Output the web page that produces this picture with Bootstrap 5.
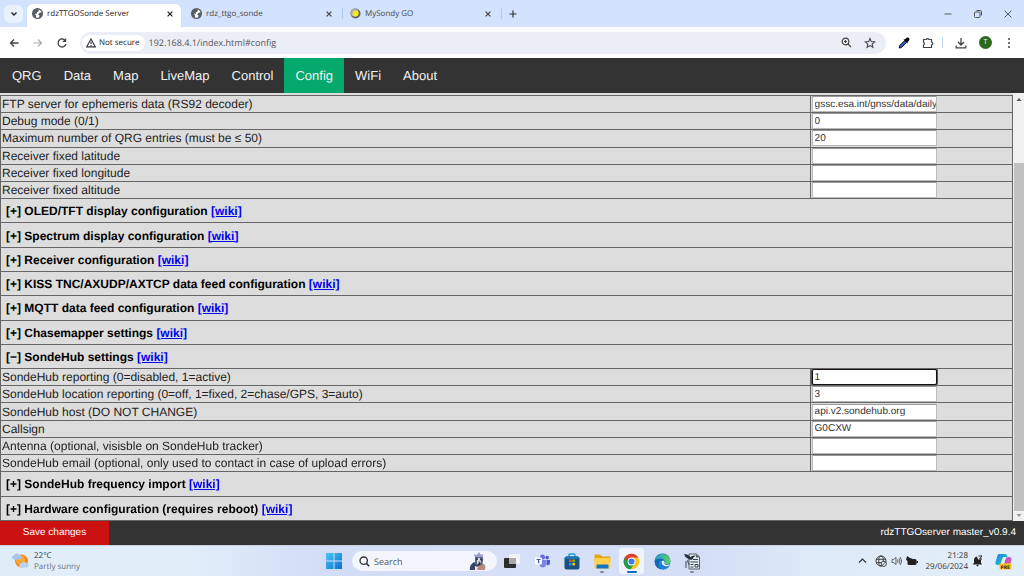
<!DOCTYPE html>
<html lang="en">
<head>
<meta charset="utf-8">
<meta name="viewport" content="width=device-width, initial-scale=1">
<title>rdzTTGOSonde Server</title>
<link href="https://cdn.jsdelivr.net/npm/bootstrap@5.3.0/dist/css/bootstrap.min.css" rel="stylesheet">
<style>
  body { font-family: "Liberation Sans", Arial, sans-serif; font-size: 12px; line-height: 16px; color: #222; background: #ddd; text-rendering: geometricPrecision; }
  button { border: 0; background: none; padding: 0; color: inherit; }
  input, button { text-rendering: inherit; }
  svg { display: block; flex: none; }
  .ui-font { font-family: "Open Sans", "Segoe UI", sans-serif; font-size: 8px; line-height: 11px; }

  /* browser chrome */
  .tabstrip { height: 27px; background: #d3e3fd; color: #474747; padding-left: 4px; }
  .tab-search { width: 19px; height: 18px; border-radius: 6px; background: #e9f0fe; }
  .browser-tab { width: 154px; height: 23px; padding: 0 7px 4px 5px; margin-right: 5px; }
  .browser-tab.current { background: #fff; border-radius: 6px 6px 0 0; color: #222; }
  .tab-line { width: 1px; height: 11px; background: #a8c7fa; }
  .tabstrip .browser-tab + .tab-line { margin-left: -3px; margin-right: 2px; margin-bottom: 4px; }
  .window-controls { gap: 22px; padding-right: 12px; }
  .toolbar { height: 31px; background: #fff; color: #444; padding: 0 10px 0 8px; }
  .address { height: 22px; border-radius: 11px; background: #ebeef7; margin: 0 12px; padding: 0 10px 0 2px; }
  .address input { border: 0; background: none; padding: 0; font-size: 9px; color: #555; outline: 0; min-width: 0; }
  .not-secure { height: 16px; border-radius: 8px; background: #fff; color: #222; padding: 0 5px 0 4px; gap: 3px; }
  .avatar { width: 13px; height: 13px; border-radius: 50%; background: #2b6a1c; color: #fff; font-size: 7px; }

  /* site menu and footer */
  .site-nav { height: 35px; background: #333; padding-left: 1px; }
  .site-nav a { display: flex; align-items: center; padding: 0 11px; font-size: 13px; color: #f2f2f2; text-decoration: none; }
  .site-nav a.active { background: #04aa6d; }
  .site-footer { height: 24px; background: #333; color: #fff; font-size: 10px; }
  .save-btn { width: 109px; background: #c11; color: #fff; }

  /* settings table */
  .panel { min-height: 0; padding-top: 2px; }
  .settings { width: 100%; height: 100%; border-collapse: collapse; table-layout: fixed; }
  .settings td, .settings th { border: 1px solid #666; padding: 0 0 0 1px; height: 17px; line-height: 16px; }
  .settings th { height: 24px; padding: 1px 0 0 5px; color: #000; }
  .settings a { color: #00e; }
  .settings label { display: block; }
  .settings input { display: block; width: 125px; height: 16px; padding: 1px 0 0 2px; border: 1px solid #bbb; border-top-color: #999; background: #fff; font-size: 10px; color: #333; outline: 0; }
  .settings input.editing { border: 1px solid #111; border-radius: 2px; box-shadow: 0 0 0 1px #555; }
  .scroll-track { width: 11px; background: #f1f1f1; padding: 3px 1px; margin-top: -2px; }
  .scroll-gap { flex: 60 0 0; }
  .scroll-thumb { flex: 347 0 0; width: 10px; background: #c1c1c1; }

  /* desktop taskbar */
  .taskbar { height: 31px; display: grid; grid-template-columns: 1fr auto 1fr; color: #333;
    background: linear-gradient(90deg, #e0edf8 0, #e2eef9 18%, #d2dcf6 32%, #d6e0f6 55%, #d3def4 68%, #deebf8 80%, #e2eef9 100%); border-top: 1px solid #c5d2e4; }
  .taskbar .center { margin-left: 9px; }
  .search-pill { width: 145px; height: 20px; border-radius: 10px; background: #f3f6fd; margin-left: 10px; padding: 0 8px 0 7px; }
  .search-pill input { border: 0; background: none; outline: 0; padding: 0; min-width: 0; font-size: 9px; color: #555; }
  .search-pill input::placeholder { color: #555; }
  .app { width: 30px; height: 26px; display: flex; flex-direction: column; align-items: center; justify-content: center; position: relative; }
  .app.open::after { content: ""; position: absolute; bottom: 1px; width: 4px; height: 2px; border-radius: 1px; background: #858b96; }
  .app.focused { background: #eef3fc; border-radius: 3px; width: 25px; margin: 0 3px 0 2px; }
  .app.focused::after { width: 10px; background: #0a6ed1; }
  .tray { padding-right: 12px; }
</style>
</head>
<body class="vh-100 d-flex flex-column overflow-hidden">

<svg class="d-none">
  <symbol id="globe" viewBox="0 0 16 16"><circle cx="8" cy="8" r="7" fill="#fff" stroke="#555c63" stroke-width="2"/><path d="M2 4 L6 1.500 L10 2 L9.500 5 L7 6 L7.500 8.500 L4 8.500 L6 11 L5.500 14 Q1 12 1 8Z M11 7 L15 6 Q15.500 12 10 14.500 L11 11 L9 9.500Z" fill="#555c63"/></symbol>
  <symbol id="cross" viewBox="0 0 10 10"><path d="M2 2 L8 8 M8 2 L2 8" stroke="currentColor" stroke-width="1.600" fill="none"/></symbol>
</svg>

<header class="tabstrip ui-font d-flex align-items-end flex-shrink-0">
  <button class="tab-search d-flex align-items-center justify-content-center mb-1 me-1" aria-label="Search tabs"><svg width="8" height="8" viewBox="0 0 8 8"><path d="M1.500 2.500 L4 5 L6.500 2.500" fill="none" stroke="#222" stroke-width="1.400"/></svg></button>
  <div class="browser-tab current d-flex align-items-center gap-1"><svg width="11" height="11"><use href="#globe"/></svg><span class="flex-grow-1">rdzTTGOSonde Server</span><button aria-label="Close tab"><svg width="8" height="8"><use href="#cross"/></svg></button></div>
  <div class="browser-tab d-flex align-items-center gap-1"><svg width="11" height="11"><use href="#globe"/></svg><span class="flex-grow-1">rdz_ttgo_sonde</span><button aria-label="Close tab"><svg width="8" height="8"><use href="#cross"/></svg></button></div>
  <span class="tab-line mb-2"></span>
  <div class="browser-tab d-flex align-items-center gap-1"><svg width="11" height="11" viewBox="0 0 11 11"><circle cx="5.500" cy="5.500" r="5" fill="#666"/><circle cx="4.500" cy="4.500" r="4" fill="#aaa"/><circle cx="5.500" cy="5.500" r="3" fill="#f8ea17"/></svg><span class="flex-grow-1">MySondy GO</span><button aria-label="Close tab"><svg width="8" height="8"><use href="#cross"/></svg></button></div>
  <span class="tab-line mb-2"></span>
  <button class="ms-1 mb-2" aria-label="New tab"><svg width="10" height="10" viewBox="0 0 10 10"><path d="M5 1.500 V8.500 M1.500 5 H8.500" stroke="#333" stroke-width="1.200"/></svg></button>
  <div class="window-controls ms-auto d-flex align-items-center h-100">
    <button aria-label="Minimise"><svg width="8" height="8" viewBox="0 0 8 8"><path d="M.5 4 H7.500" stroke="#555"/></svg></button>
    <button aria-label="Restore"><svg width="8" height="8" viewBox="0 0 8 8"><rect x=".5" y="2" width="5.500" height="5.500" rx="1" fill="none" stroke="#555"/><path d="M2.500 .5 H6 Q7.500 .5 7.500 2 V5.500" fill="none" stroke="#555"/></svg></button>
    <button aria-label="Close"><svg width="8" height="8" viewBox="0 0 8 8"><path d="M.5 .5 L7.500 7.500 M7.500 .5 L.5 7.500" stroke="#555"/></svg></button>
  </div>
</header>

<div class="toolbar ui-font d-flex align-items-center flex-shrink-0">
  <button aria-label="Back"><svg width="12" height="12" viewBox="0 0 12 12"><path d="M10.500 6 H2.500 M6 2.500 L2.500 6 L6 9.500" fill="none" stroke="#444" stroke-width="1.300"/></svg></button>
  <button class="mx-2 px-1" aria-label="Forward"><svg width="12" height="12" viewBox="0 0 12 12"><path d="M1.500 6 H9.500 M6 2.500 L9.500 6 L6 9.500" fill="none" stroke="#aaa" stroke-width="1.200"/></svg></button>
  <button aria-label="Reload"><svg width="12" height="12" viewBox="0 0 12 12"><path d="M9.500 3.800 A4 4 0 1 0 10 7" fill="none" stroke="#444" stroke-width="1.300"/><path d="M10.200 1 V5 H6.200Z" fill="#444"/></svg></button>
  <div class="address d-flex align-items-center flex-grow-1">
    <button class="not-secure d-flex align-items-center"><svg width="10" height="10" viewBox="0 0 9 9"><path d="M4.500 .9 L8.400 8 H.6Z" fill="none" stroke="#333"/><path d="M4.500 3.300 V5.500 M4.500 6.200 V7.200" stroke="#333"/></svg>Not secure</button>
    <input class="flex-grow-1 ms-1" type="text" value="192.168.4.1/index.html#config" aria-label="Address">
    <button class="me-2 pe-1" aria-label="Zoom"><svg width="11" height="11" viewBox="0 0 11 11"><circle cx="4.500" cy="4.500" r="3.300" fill="none" stroke="#444" stroke-width="1.200"/><path d="M7 7 L10 10 M4.500 3 V6 M3 4.500 H6" stroke="#444" stroke-width="1.100"/></svg></button>
    <button aria-label="Bookmark"><svg width="12" height="12" viewBox="0 0 12 12"><path d="M6 1.500 L7.300 4.600 L10.700 4.900 L8.100 7.100 L8.900 10.400 L6 8.600 L3.100 10.400 L3.900 7.100 L1.300 4.900 L4.700 4.600Z" fill="none" stroke="#444" stroke-width="1.100"/></svg></button>
  </div>
  <button class="me-2 pe-1" aria-label="Colour picker"><svg width="12" height="12" viewBox="0 0 12 12"><path d="M6.800 3.500 L8.700 5.400 L3.500 10.600 L1.300 11 L1.500 8.700Z" fill="#2f56c8" stroke="#111" stroke-width="1"/><path d="M5.500 2.500 L7 2.300 L9 .6 Q11.700 .4 11.400 3 L9.700 5 L9.400 6.500Z" fill="#000"/></svg></button>
  <button aria-label="Extensions"><svg width="12" height="12" viewBox="0 0 12 12"><path d="M1.500 2.500 H4.200 A1.500 1.300 0 0 1 7 2.500 H9.500 V5 A1.300 1.400 0 0 1 9.500 7.800 V10.500 H1.500 V8 A1.500 1.500 0 0 0 1.500 5.200Z" fill="none" stroke="#444" stroke-width="1.200"/></svg></button>
  <span class="tab-line ms-2 me-2 opacity-75"></span>
  <button class="ms-1 me-2 pe-1" aria-label="Downloads"><svg width="12" height="12" viewBox="0 0 12 12"><path d="M6 1 V7.500 M3 5 L6 8 L9 5 M1.200 8.500 V10.800 H10.800 V8.500" fill="none" stroke="#444" stroke-width="1.300"/></svg></button>
  <button class="avatar me-2" aria-label="Profile">T</button>
  <button class="ps-1" aria-label="Menu"><svg width="10" height="12" viewBox="0 0 10 12"><g fill="#444"><circle cx="5" cy="2" r="1"/><circle cx="5" cy="6" r="1"/><circle cx="5" cy="10" r="1"/></g></svg></button>
</div>

<nav class="site-nav d-flex flex-shrink-0">
  <a href="#qrg">QRG</a><a href="#data">Data</a><a href="#map">Map</a><a href="#livemap">LiveMap</a><a href="#control">Control</a><a class="active" href="#config">Config</a><a href="#wifi">WiFi</a><a href="#about">About</a>
</nav>

<main class="panel d-flex flex-grow-1">
  <form id="config" class="flex-grow-1">
    <table class="settings">
      <colgroup><col style="width:80%"><col></colgroup>
      <tbody>
      <tr><td><label for="ftp">FTP server for ephemeris data (RS92 decoder)</label></td><td><input id="ftp" type="text" value="gssc.esa.int/gnss/data/daily"></td></tr>
      <tr><td><label for="debug">Debug mode (0/1)</label></td><td><input id="debug" type="text" value="0"></td></tr>
      <tr><td><label for="maxqrg">Maximum number of QRG entries (must be ≤ 50)</label></td><td><input id="maxqrg" type="text" value="20"></td></tr>
      <tr><td><label for="lat">Receiver fixed latitude</label></td><td><input id="lat" type="text"></td></tr>
      <tr><td><label for="lon">Receiver fixed longitude</label></td><td><input id="lon" type="text"></td></tr>
      <tr><td><label for="alt">Receiver fixed altitude</label></td><td><input id="alt" type="text"></td></tr>
      <tr><th colspan="2">[+] OLED/TFT display configuration <a href="#w1">[wiki]</a></th></tr>
      <tr><th colspan="2">[+] Spectrum display configuration <a href="#w2">[wiki]</a></th></tr>
      <tr><th colspan="2">[+] Receiver configuration <a href="#w3">[wiki]</a></th></tr>
      <tr><th colspan="2">[+] KISS TNC/AXUDP/AXTCP data feed configuration <a href="#w4">[wiki]</a></th></tr>
      <tr><th colspan="2">[+] MQTT data feed configuration <a href="#w5">[wiki]</a></th></tr>
      <tr><th colspan="2">[+] Chasemapper settings <a href="#w6">[wiki]</a></th></tr>
      <tr><th colspan="2">[−] SondeHub settings <a href="#w7">[wiki]</a></th></tr>
      <tr><td><label for="shr">SondeHub reporting (0=disabled, 1=active)</label></td><td><input id="shr" class="editing" type="text" value="1" autofocus></td></tr>
      <tr><td><label for="shl">SondeHub location reporting (0=off, 1=fixed, 2=chase/GPS, 3=auto)</label></td><td><input id="shl" type="text" value="3"></td></tr>
      <tr><td><label for="shh">SondeHub host (DO NOT CHANGE)</label></td><td><input id="shh" type="text" value="api.v2.sondehub.org"></td></tr>
      <tr><td><label for="call">Callsign</label></td><td><input id="call" type="text" value="G0CXW"></td></tr>
      <tr><td><label for="ant">Antenna (optional, visisble on SondeHub tracker)</label></td><td><input id="ant" type="text"></td></tr>
      <tr><td><label for="mail">SondeHub email (optional, only used to contact in case of upload errors)</label></td><td><input id="mail" type="text"></td></tr>
      <tr><th colspan="2">[+] SondeHub frequency import <a href="#w8">[wiki]</a></th></tr>
      <tr><th colspan="2">[+] Hardware configuration (requires reboot) <a href="#w9">[wiki]</a></th></tr>
      </tbody>
    </table>
  </form>
  <div class="scroll-track d-flex flex-column align-items-center flex-shrink-0" aria-hidden="true">
    <svg width="8" height="7" viewBox="0 0 8 7"><path d="M1.500 5 L4 2 L6.500 5Z" fill="#555"/></svg>
    <span class="scroll-gap"></span><span class="scroll-thumb"></span>
    <svg width="8" height="7" viewBox="0 0 8 7"><path d="M1.500 3 L4 6 L6.500 3Z" fill="#999"/></svg>
  </div>
</main>

<footer class="site-footer d-flex justify-content-between align-items-center flex-shrink-0">
  <button class="save-btn h-100" type="submit" form="config">Save changes</button>
  <span class="pe-2">rdzTTGOserver master_v0.9.4</span>
</footer>

<div class="taskbar ui-font align-items-center flex-shrink-0">
  <button class="d-flex align-items-center text-start ps-2">
    <svg class="mx-1" width="18" height="18" viewBox="0 0 18 18"><circle cx="9.500" cy="9" r="6.500" fill="#f58a1f"/><circle cx="8.500" cy="8" r="4.500" fill="#fba63a"/><path d="M2 7.500 a2 2 0 0 1 0-4 a3 3 0 0 1 5.500-.3 a2.200 2.200 0 0 1 .5 4.300Z" fill="#a9c6f2"/><path d="M9 15.500 a2 2 0 0 1 .3-4 a3 3 0 0 1 5.400 0 a2 2 0 0 1 0 4Z" fill="#b9d2f6"/></svg>
    <span>22°C<br><span class="text-secondary">Partly sunny</span></span>
  </button>
  <div class="center d-flex align-items-center">
    <button aria-label="Start"><svg width="16" height="16" viewBox="0 0 16 16"><defs><linearGradient id="win" x2="1" y2="1"><stop stop-color="#4cc9f5"/><stop offset="1" stop-color="#0a6ccf"/></linearGradient></defs><path d="M0 0 H7.500 V7.500 H0Z M8.500 0 H16 V7.500 H8.500Z M0 8.500 H7.500 V16 H0Z M8.500 8.500 H16 V16 H8.500Z" fill="url(#win)"/></svg></button>
    <div class="search-pill d-flex align-items-center">
      <svg width="11" height="11" viewBox="0 0 11 11"><circle cx="4.700" cy="4.700" r="3.700" fill="none" stroke="#333" stroke-width="1.300"/><path d="M7.400 7.400 L10.200 10.200" stroke="#333" stroke-width="1.500"/></svg>
      <input class="flex-grow-1 ms-1" type="search" placeholder="Search" aria-label="Search">
      <svg width="22" height="18" viewBox="0 0 22 18"><path d="M3 18 Q2 13 7 10 L11 13 L13 18Z" fill="#34456e"/><path d="M10 18 Q11 11 14 11 Q20 12 18 18Z" fill="#b98a7d"/><path d="M8 5 Q9 2 13 3 Q17 4 16 9 L15 13 Q11 15 8 12Z" fill="#58657f"/><path d="M10 6 Q14 5 14 9 L13 12 H10Z" fill="#d7d9df"/><path d="M8 5 L7 2 L10 3 L12 0 L14 3 L16 2 V5Z" fill="#9b9bd0"/><circle cx="10" cy="7" r="1" fill="#252d45"/><circle cx="14" cy="7.500" r="1" fill="#252d45"/><path d="M12 9 L13.500 12 L11 14 Z" fill="#222"/><path d="M8 14 L11 15 L10 18 H8Z" fill="#eee"/></svg>
    </div>
    <button class="app" aria-label="Task view"><svg width="16" height="16" viewBox="0 0 16 16"><rect x="5" y="1" width="11" height="10" rx="1" fill="#f4f4f4"/><rect x="0" y="5" width="12" height="10" rx="1" fill="#2c2c2c"/><path d="M5 5 H12 V11 H5Z" fill="#aaa"/></svg></button>
    <button class="app" aria-label="Teams"><svg width="16" height="14" viewBox="0 0 16 14"><circle cx="8.500" cy="3" r="2.500" fill="#6870d6"/><circle cx="13.200" cy="3.600" r="1.800" fill="#5059c9"/><path d="M5.500 6 H12 V10 Q12 13.500 8.500 13.500 Q5.500 13 5.500 10Z" fill="#7b83eb"/><path d="M12.500 6 H16 V9 Q15.500 12 12.500 11Z" fill="#5059c9"/><rect x="1" y="3.500" width="7" height="7" rx="1" fill="#fff"/><path d="M2.500 5.500 H6.500 M4.500 5.500 V9.200" stroke="#464eb8" stroke-width="1.200"/></svg></button>
    <button class="app" aria-label="Store"><svg width="16" height="17" viewBox="0 0 16 17"><path d="M5 4 V2 Q5 1 6 1 H10 Q11 1 11 2 V4" fill="none" stroke="#1c9bdf" stroke-width="1.400"/><rect x=".5" y="3.500" width="15" height="13" rx="2" fill="#1a4f80"/><path d="M.5 6 Q.5 3.500 3 3.500 H13 Q15.500 3.500 15.500 6Z" fill="#1776b5"/><path d="M5 6.500 H7.600 V9.100 H5Z" fill="#f25022"/><path d="M8.400 6.500 H11 V9.100 H8.400Z" fill="#7fba00"/><path d="M5 9.900 H7.600 V12.500 H5Z" fill="#00a4ef"/><path d="M8.400 9.900 H11 V12.500 H8.400Z" fill="#ffb900"/></svg></button>
    <button class="app open" aria-label="File Explorer"><svg width="17" height="15" viewBox="0 0 17 15"><path d="M.5 1.500 Q.5 .5 1.500 .5 H6 L8 2.500 H15.500 Q16.500 2.500 16.500 3.500 V8 H.5Z" fill="#e5a50f"/><rect x=".5" y="4" width="16" height="10.500" rx="1" fill="#ffd04e"/><path d="M2.500 14.500 V11.500 Q2.500 10.500 3.500 10.500 H13.500 Q14.500 10.500 14.500 11.500 V14.500Z" fill="#1273c4"/></svg></button>
    <button class="app open focused" aria-label="Chrome"><svg width="17" height="17" viewBox="0 0 48 48"><circle cx="24" cy="24" r="22" fill="#fcc31e"/><path d="M24 24 L5 13 A22 22 0 0 0 21 46 L33 29Z" fill="#249a4c"/><path d="M24 24 L5 13 A22 22 0 0 1 43 13 H24Z" fill="#df3b2f"/><path d="M5 13 L15 30 L24 13Z" fill="#df3b2f"/><path d="M5 13 L15 30 L21 32 L21 46 A22 22 0 0 1 5 13Z" fill="#249a4c"/><circle cx="24" cy="24" r="11" fill="#fff"/><circle cx="24" cy="24" r="8.500" fill="#3b7ded"/></svg></button>
    <button class="app" aria-label="Edge"><svg width="17" height="17" viewBox="0 0 17 17"><defs><linearGradient id="eg" x2="1"><stop stop-color="#1f9ad8"/><stop offset="1" stop-color="#5fd35a"/></linearGradient></defs><circle cx="8.500" cy="8.500" r="8" fill="#1269b8"/><path d="M.6 8 A8 8 0 0 1 16.500 8.500 Q16 12 11.500 11.500 Q10 11 11 9.500 Q10.500 5.500 6.500 5.500 Q2 5.500 .6 8Z" fill="url(#eg)"/><path d="M7.500 7.500 Q5.500 14 12 14.500 Q14 14.200 15.500 13 A8 8 0 0 1 9 16.500 Q4 15 5 9.500 Q6 7.500 7.500 7.500Z" fill="#1a8ae0"/><path d="M7.500 8.500 Q8.500 7 10 8 Q11 9.500 10.500 11 Q12 13 16 11 Q15 13.500 12 13.500 Q7.500 13 7.500 8.500Z" fill="#dcecf8"/></svg></button>
    <button class="app open" aria-label="Documents"><svg width="17" height="17" viewBox="0 0 17 17"><path d="M5 1 H12.500 L15.500 4 V16 H5Z" fill="#e6edf1" stroke="#53616d"/><path d="M12 1 L15.500 4.500 H12Z" fill="#53616d"/><path d="M0 1 Q4 1 6.500 4 Q8 2 12 2.500 Q9 4 8.500 6.500 Q5 7.500 3 5 Q1 4 0 1Z" fill="#26333e"/><path d="M2 8 V15 M3.500 7 L5 12" stroke="#53616d" stroke-width="1.200"/><path d="M9 6.500 H14 M6.500 9 H14 M6.500 11.500 H9.500 M6.500 14 H9.500 M11 11.500 H14 V14 H11Z" stroke="#34434f" fill="none"/></svg></button>
  </div>
  <div class="tray d-flex align-items-center justify-content-end">
    <button class="me-2" aria-label="Hidden icons"><svg width="9" height="8" viewBox="0 0 9 8"><path d="M1 5.500 L4.500 2 L8 5.500" fill="none" stroke="#333" stroke-width="1.200"/></svg></button>
    <button class="me-1" aria-label="Network"><svg width="12" height="12" viewBox="0 0 12 12"><g fill="none" stroke="#333" stroke-width=".9"><circle cx="6" cy="6" r="5"/><ellipse cx="6" cy="6" rx="2.300" ry="5"/><path d="M1 4.300 H11 M1 7.700 H6"/></g><circle cx="8.800" cy="8.800" r="2.600" fill="#e2eef9" stroke="#333" stroke-width=".9"/><path d="M7 10.600 L10.600 7" stroke="#333" stroke-width=".9"/></svg></button>
    <button class="me-1" aria-label="Volume"><svg width="11" height="10" viewBox="0 0 11 10"><path d="M1 3.500 H2.500 L5 1.500 V8.500 L2.500 6.500 H1Z M6.500 3.500 Q7.500 5 6.500 6.500 M8 2.300 Q9.800 5 8 7.700 M9.300 1 Q12 5 9.300 9" fill="none" stroke="#444" stroke-width=".8"/></svg></button>
    <button class="me-2" aria-label="Battery"><svg width="12" height="10" viewBox="0 0 12 10"><rect x="1.500" y="3" width="9" height="6" rx="1.500" fill="#222"/><path d="M10.500 5 H12 V7 H10.500Z M1 0 L4 2 L6 2.500 L4 6 L0 4Z" fill="#222"/></svg></button>
    <button class="text-end me-1 text-nowrap">21:28<br>29/06/2024</button>
    <button class="me-2 pe-1" aria-label="Notifications"><svg width="11" height="12" viewBox="0 0 11 12"><path d="M2 8 V5 Q2 2 5 1.500 L6 4.500 H9 V8 L10 9.500 H.5Z" fill="#222"/><path d="M4 10 H7 L5.500 11.500Z" fill="#222"/><path d="M6.500 1 H10 L7.500 4 H10" fill="none" stroke="#222"/></svg></button>
    <button aria-label="Copilot"><svg width="17" height="17" viewBox="0 0 17 17"><defs><linearGradient id="c1" x2="1" y2="1"><stop stop-color="#2a7de1"/><stop offset=".6" stop-color="#1bb5c9"/><stop offset="1" stop-color="#9bd04a"/></linearGradient><linearGradient id="c2" x2="1" y2="1"><stop stop-color="#a14ee0"/><stop offset="1" stop-color="#f2648d"/></linearGradient></defs><path d="M4 1 H10 Q12 1 12.500 4 H9 Q7.500 4 6.500 8 Q6 12 3.500 12 H2.500 Q0 12 .5 9 L2 4 Q2.500 1 4 1Z" fill="url(#c1)"/><path d="M13 4 H14 Q17 4 16.500 7 L15 12 Q14 15 12 15 H7 Q5 15 4.500 12 H7.500 Q9 12 10 8 Q10.800 4 13 4Z" fill="url(#c2)"/><rect x="4.500" y="10.500" width="12" height="6" rx="1" fill="#ffc71e"/><text x="5.500" y="15.500" font-size="5" font-weight="700" fill="#222">PRE</text></svg></button>
  </div>
</div>

<script src="https://cdn.jsdelivr.net/npm/bootstrap@5.3.0/dist/js/bootstrap.bundle.min.js"></script>
</body>
</html>
